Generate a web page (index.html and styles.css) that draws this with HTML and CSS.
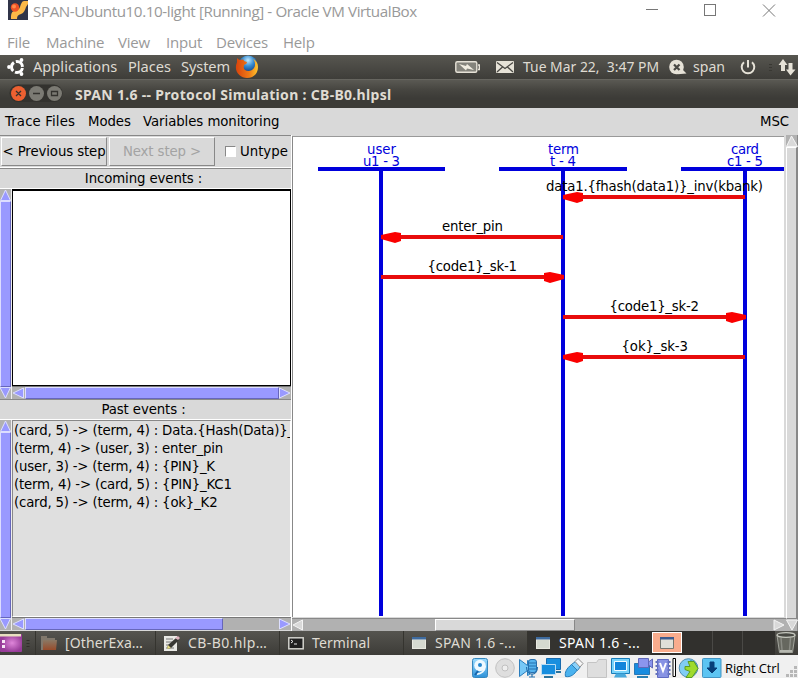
FILE: index.html
```html
<!DOCTYPE html>
<html lang="en">
<head>
<meta charset="utf-8">
<title>SPAN-Ubuntu10.10-light [Running] - Oracle VM VirtualBox</title>
<link rel="stylesheet" href="styles.css">
</head>
<body>
<header class="host">
  <div class="host-title">
    <svg class="app-icon" width="20" height="20" viewBox="0 0 20 20"><rect width="20" height="20" fill="#303448"/><path d="M20 1h-4c-2 0-3 3-4 6s-3 3-6 4-3 4-3 8h6c0-3 1-4 4-5s4-4 5-7l2-3z" fill="#fbb848"/><circle cx="7" cy="7.500" r="4.200" fill="#ee5226"/><circle cx="6" cy="6.500" r="2" fill="#ff8a4a"/></svg>
    <span class="host-name">SPAN-Ubuntu10.10-light [Running] - Oracle VM VirtualBox</span>
    <svg class="win-controls" width="132" height="14" viewBox="0 0 132 14" fill="none" stroke="#777"><path d="M0 4.500h12"/><rect x="58.500" y="-.5" width="11" height="11"/><path d="M117 -.5l12 12M129 -.5l-12 12"/></svg>
  </div>
  <nav class="host-menu"><span class="m-file">File</span><span class="m-machine">Machine</span><span class="m-view">View</span><span class="m-input">Input</span><span class="m-devices">Devices</span><span>Help</span></nav>
</header>

<div class="panel">
  <svg class="ubuntu" width="18" height="20" viewBox="0 0 18 20"><circle cx="11" cy="10" r="5.500" fill="none" stroke="#fff" stroke-width="3" stroke-dasharray="9.500 2.020" stroke-dashoffset="-1"/><g fill="#fff"><circle cx="3" cy="10" r="1.900"/><circle cx="15.500" cy="3" r="1.900"/><circle cx="15.500" cy="17" r="1.900"/></g></svg>
  <span class="p-app">Applications</span><span class="p-places">Places</span><span class="p-system">System</span>
  <svg class="firefox" width="24" height="24" viewBox="0 0 24 24"><defs><radialGradient id="globe" cx=".5" cy=".25" r=".7"><stop offset="0" stop-color="#bfe9ff"/><stop offset=".45" stop-color="#368bd0"/><stop offset="1" stop-color="#0b2e73"/></radialGradient><linearGradient id="fox" x1="0" x2="1"><stop offset="0" stop-color="#d9430c"/><stop offset=".6" stop-color="#ee7a16"/><stop offset="1" stop-color="#ffc62e"/></linearGradient></defs><circle cx="13" cy="10" r="9.500" fill="url(#globe)"/><path d="M2 3c1 1 2 2 4 2 2-1 3 0 3 1l3 1c0 2-2 2-3 3 0 2-1 3 1 5 3 2 7 1 9-2 2-3 1-7-1-9 3 1 5 4 5 8 0 7-5 11-11 11S0 18 1 11c0-2 1-3 1-4z" fill="url(#fox)"/></svg>
  <span class="grow"></span>
  <svg class="tray" width="343" height="24" viewBox="455 55 343 24">
    <rect x="455.800" y="61.800" width="21" height="10.500" rx="1.500" fill="#84837b" stroke="#e6e2d7" stroke-width="1.400"/><path d="M478 65h1.300v4.500H478" fill="none" stroke="#e6e2d7" stroke-width="1.400"/><path d="M459 64l7 2 1-2 7 6-7-1.500-1 2z" fill="#f0ece0"/>
    <rect x="496" y="61" width="18" height="12" rx="1" fill="#e6e2d7"/><path d="M497 62.500l8 6 8-6M497 72l5.500-5M513 72l-5.500-5" fill="none" stroke="#494843" stroke-width="1.300"/>
    <circle cx="676.500" cy="67" r="7.300" fill="#e6e2d7"/><path d="M681 68l5.500 5.500-9 .8z" fill="#e6e2d7"/><path d="M674 64.500l5.500 5.500M679.500 64.500L674 70" stroke="#494843" stroke-width="2.200"/>
    <path d="M744 62.200a6.300 6.300 0 1 0 8 0M748 60v7.500" fill="none" stroke="#e6e2d7" stroke-width="2"/>
    <path d="M769 64.500h3M769 67.500h3M769 70.500h3" stroke="#393833"/>
    <path d="M778.500 65l4.500-6 4.500 6h-2.500v6h-4v-6zM786 69.500h2.500V63h4v6.500h3l-5 6z" fill="#e6e2d7"/>
    <text class="ubuntu-text" x="523" y="72" textLength="136" lengthAdjust="spacingAndGlyphs" xml:space="preserve">Tue Mar 22,&#160; 3:47 PM</text>
    <text class="ubuntu-text" x="693" y="72" textLength="32" lengthAdjust="spacingAndGlyphs">span</text>
  </svg>
</div>

<div class="titlebar">
  <svg width="55" height="20" viewBox="9 84 55 20"><rect x="9.500" y="84.500" width="53" height="17.500" rx="8.700" fill="#33322e"/><circle cx="18.500" cy="93.500" r="7.500" fill="#ec6031"/><circle cx="36.500" cy="93.500" r="7.500" fill="#7b7a73"/><circle cx="54.500" cy="93.500" r="7.500" fill="#7b7a73"/><path d="M16 91l5 5M21 91l-5 5M33 93.500h7M51.500 91.500h6v4h-6z" fill="none" stroke="#33322e" stroke-width="1.300"/></svg>
  <strong>SPAN 1.6 -- Protocol Simulation : CB-B0.hlpsl</strong>
</div>

<nav class="menu"><span class="t-trace">Trace Files</span><span class="t-modes">Modes</span><span class="t-vars">Variables monitoring</span><span class="t-msc">MSC</span></nav>

<main class="work">
  <section class="left">
    <div class="tools">
      <button class="prev">&lt; Previous step</button><button class="next" disabled>Next step &gt;</button>
      <label><i class="box"></i><span>Untype</span></label>
    </div>
    <div class="label"><span class="l-in">Incoming events :</span></div>
    <div class="listing">
      <div class="vbar"><svg width="12" height="12" viewBox="0 0 12 12"><path d="M5.500 1L.5 11.500h10z" class="tri"/></svg><i class="thumb"></i><svg width="12" height="12" viewBox="0 0 12 12"><path d="M0 .5h10.500L5.500 11z" class="tri"/></svg></div>
      <div class="right">
        <div class="incoming"></div>
        <div class="hbar"><svg width="13" height="12" viewBox="0 0 13 12"><path d="M11.500 1v10L1 6z" class="tri"/></svg><i class="thumb"></i><svg width="12" height="12" viewBox="0 0 12 12"><path d="M.5 1v10L11 6z" class="tri"/></svg></div>
      </div>
    </div>
    <div class="label past-label"><span class="l-past">Past events :</span></div>
    <div class="listing">
      <div class="vbar"><svg width="12" height="12" viewBox="0 0 12 12"><path d="M5.500 1L.5 11.500h10z" class="tri"/></svg><i class="thumb"></i><svg width="12" height="12" viewBox="0 0 12 12"><path d="M0 .5h10.500L5.500 11z" class="tri"/></svg></div>
      <div class="right">
        <ul class="past"><li>(card, 5) -&gt; (term, 4) : Data.{Hash(Data)}_</li><li>(term, 4) -&gt; (user, 3) : enter_pin</li><li>(user, 3) -&gt; (term, 4) : {PIN}_K</li><li>(term, 4) -&gt; (card, 5) : {PIN}_KC1</li><li>(card, 5) -&gt; (term, 4) : {ok}_K2</li></ul>
        <div class="hbar"><svg width="13" height="12" viewBox="0 0 13 12"><path d="M11.500 1v10L1 6z" class="tri"/></svg><i class="thumb short"></i><span class="grow"></span><svg width="12" height="12" viewBox="0 0 12 12"><path d="M.5 1v10L11 6z" class="tri"/></svg></div>
      </div>
    </div>
  </section>
  <section class="chart">
    <div class="canvas">
      <svg width="491" height="479" viewBox="293 137 491 479">
        <defs><path id="head" d="M0-2L14-5l6 1v8L14 6 0 2z"/></defs>
        <g fill="#0000dc"><path d="M318 167h127v4H318zM499 167h128v4H499zM681 167h103v4H681zM379 169h4v447h-4zM561 169h4v447h-4zM743 169h4v447h-4z"/></g>
        <g fill="#e80c0c"><path d="M577 195h168v4H577zM395 235h168v4H395zM381 275h168v4H381zM563 315h168v4H563zM577 355h168v4H577z"/><g fill="#fa0000"><use href="#head" x="563" y="197"/><use href="#head" x="381" y="237"/><use href="#head" transform="translate(564 277) scale(-1 1)"/><use href="#head" transform="translate(746 317) scale(-1 1)"/><use href="#head" x="563" y="357"/></g></g>
        <g class="actor"><text x="367" y="154" textLength="29">user</text><text x="363" y="166" textLength="37">u1 - 3</text><text x="548" y="154" textLength="31">term</text><text x="550" y="166" textLength="26">t - 4</text><text x="731" y="154" textLength="28">card</text><text x="727" y="166" textLength="36">c1 - 5</text></g>
        <g class="msg"><text x="546" y="191" textLength="217">data1.{fhash(data1)}_inv(kbank)</text><text x="442" y="231" textLength="61">enter_pin</text><text x="427.500" y="271" textLength="89.500">{code1}_sk-1</text><text x="609.500" y="311" textLength="89.500">{code1}_sk-2</text><text x="621.500" y="351" textLength="66.500">{ok}_sk-3</text></g>
      </svg>
    </div>
    <div class="vbar grey"><svg width="12" height="12" viewBox="0 0 12 12"><path d="M5.500 1L.5 11.500h11z" class="tri"/></svg><i class="thumb"></i><svg width="12" height="12" viewBox="0 0 12 12"><path d="M.5 1h11L6 11z" class="tri"/></svg></div>
    <div class="hbar grey"><svg width="13" height="12" viewBox="0 0 13 12"><path d="M10.500 1v10L1 6z" class="tri"/></svg><span class="gap"></span><i class="thumb mid"></i><span class="grow"></span><svg width="13" height="12" viewBox="0 0 13 12"><path d="M1 1v10L11 6z" class="tri"/></svg></div>
    <div class="vbar grey corner"><svg width="12" height="12" viewBox="0 0 12 12"><path d="M.5 1h11L6 11z" class="tri"/></svg></div>
  </section>
</main>

<footer class="taskbar">
  <div class="desk"><svg width="36" height="24" viewBox="0 0 36 24"><defs><radialGradient id="wall" cx=".55"><stop offset="0" stop-color="#df86da"/><stop offset="1" stop-color="#973c99"/></radialGradient></defs><rect y="3" width="22" height="18" rx="1" fill="url(#wall)"/><path d="M0 3h21v2.500H0z" fill="#e8dfc1"/><path d="M2 9h3v3H2zM2 14h3v3H2z" fill="#f7e4f5"/><path d="M26.500 9.500h3M26.500 12.500h3M26.500 15.500h3" stroke="#302f2b"/></svg></div>
  <div class="task w1"><svg width="17" height="16" viewBox="0 0 17 16"><defs><linearGradient id="fold" x2="0" y2="1"><stop stop-color="#8a7965"/><stop offset="1" stop-color="#984c2b"/></linearGradient></defs><path d="M1 1h6v2h8v12H1z" fill="#81786c"/><path d="M3 5h14l-1 10H3z" fill="url(#fold)"/></svg><span class="x1">[OtherExa…</span></div>
  <div class="task w2"><svg width="17" height="16" viewBox="0 0 17 16"><path d="M1 1h13v15H1z" fill="#e9e9e5"/><path d="M3 4h7M3 7h6M3 10h5M3 13h8" stroke="#777"/><path d="M4 14l1-4L13 3l3 2-8 8z" fill="#383834"/><path d="M4 14l1-4 3 3z" fill="#e6dd82"/><path d="M12 3l3-2 2 2-2 2z" fill="#deb2be"/></svg><span class="x2">CB-B0.hlp…</span></div>
  <div class="task w3"><svg width="16" height="14" viewBox="0 0 16 14"><rect x=".8" y="1.800" width="14.400" height="11" fill="#202020" stroke="#d2d2cc" stroke-width="1.500"/><path d="M3 4l2 1.500L3 7M6 8h3" fill="none" stroke="#eee"/></svg><span class="x3">Terminal</span></div>
  <div class="task w4"><svg width="14" height="12" viewBox="0 0 14 12"><path d="M0 0h14v12H0z" fill="#e8e8e0"/><path d="M0 0h14v2.500H0z" fill="#3e6b9f"/><path d="M1 3h12v8H1z" fill="#d5d9d0"/></svg><span class="x4">SPAN 1.6 -...</span></div>
  <div class="task w5"><svg width="14" height="12" viewBox="0 0 14 12"><path d="M0 0h14v12H0z" fill="#e8e8e0"/><path d="M0 0h14v2.500H0z" fill="#3e6b9f"/><path d="M1 3h12v8H1z" fill="#d5d9d0"/></svg><span class="x4">SPAN 1.6 -...</span></div>
  <div class="pager"><div class="ws on"><svg width="14" height="12" viewBox="0 0 14 12"><path d="M.5.5h13v11H.5z" fill="#e0e0d8" stroke="#77786f"/><path d="M0 0h14v2.500H0z" fill="#3e5b8f"/></svg></div><div class="ws"></div><div class="ws"></div><div class="ws last"></div></div>
  <svg class="trash" width="22" height="24" viewBox="0 0 22 24"><path d="M2 4h18l-2.500 17.500h-13z" fill="#66675f" stroke="#a2a49c"/><path d="M6 7l1 12M15.500 7l-1 12" stroke="#8a8b84" stroke-width="1.500"/><ellipse cx="11" cy="4" rx="9" ry="2.300" fill="#484944" stroke="#c6c8bf" stroke-width="1.300"/><path d="M5 20h12" stroke="#b6b8b0" stroke-width="2"/></svg>
</footer>

<div class="status">
  <svg width="252" height="23" viewBox="471 655 252 23">
    <defs><linearGradient id="blue" x2="0" y2="1"><stop stop-color="#9bdcff"/><stop offset="1" stop-color="#2c91d9"/></linearGradient></defs>
    <rect x="472.500" y="658.500" width="15" height="19" rx="2" fill="url(#blue)" stroke="#3687bd"/><circle cx="480" cy="665.500" r="5.800" fill="#eef9ff"/><circle cx="480" cy="665" r="2" fill="#2386ce"/><path d="M485 666c0 5-4 8-8 8" fill="none" stroke="#eef9ff" stroke-width="2"/><path d="M478 671l-3 4" stroke="#1765ac" stroke-width="2"/>
    <circle cx="505" cy="668" r="9.300" fill="#dedede" stroke="#c2c2c2"/><circle cx="505" cy="668" r="3" fill="#eee" stroke="#c0c0c0"/>
    <path d="M519.500 659.500l8 6v-5l2 1v13l-2 1v-5l-8 6z" fill="#77c8f7" stroke="#297dbd"/><rect x="528.500" y="659.500" width="8" height="13" rx="2.500" fill="#54b3ef" stroke="#286fae"/><path d="M526.500 667c0 9.500 11 9.500 11 0M532 674v3M529 677h6M529 663h7M529 666h7M529 669h7" fill="none" stroke="#2470ad" stroke-width="1.200"/>
    <path d="M546.500 658.500h14v11h-14z" fill="#198fdf" stroke="#186aad"/><path d="M541.500 664.500h14v10h-14z" fill="#178edf" stroke="#b8dcf4"/><path d="M544 677h9M556 672h5" stroke="#2b739c" stroke-width="2"/>
    <path d="M565.500 676.500c-1-4 1-8 6-12l6 5c-3 5-7 8-12 7z" fill="#4ab2ef" stroke="#267dba"/><path d="M571.500 664.500l4-3 5 5-3 4z" fill="#8ad1fa" stroke="#317eb4"/><path d="M575 661.500l3-3 5 5-3 3.500z" fill="#f7f7f7" stroke="#909090"/>
    <path d="M587.500 677.500v-15h9l2-3h8v18z" fill="#dedede" stroke="#c4c4c4"/>
    <path d="M611.500 658.500h18v15h-18z" fill="#78d3fb" stroke="#187cb9"/><path d="M614.500 661.500h12v9h-12z" fill="#1285db" stroke="#f1fbff"/><path d="M614 677.500h13l-2-4h-9z" fill="#48a9dc"/>
    <path d="M634.500 663.500h15v11h-15z" fill="#188ce0" stroke="#2a78b4"/><path d="M637 677h11" stroke="#287fb4" stroke-width="2"/><path d="M638.500 658.500h10v9h-10zM648.500 662l4-3v9l-4-3z" fill="#8a95ed" stroke="#6068b8"/>
    <path d="M657.500 659.500h11v18h-11z" fill="#8793e4" stroke="#606bc2"/><path d="M655.500 662h3M655.500 666h3M655.500 670h3M655.500 674h3M667.500 662h3M667.500 666h3M667.500 670h3M667.500 674h3" stroke="#6472bd" stroke-width="2"/><path d="M660 663l3 8 3-8" fill="none" stroke="#fff" stroke-width="2"/>
    <path d="M673 658.500h2.500v18H673z" fill="#fff" stroke="#000"/>
    <circle cx="688.500" cy="668" r="9.300" fill="#80cdf5" stroke="#518fb5"/><path d="M690 660c5 1 7 4 7 8l-4-2z" fill="#2b90a8"/><path d="M688 661.500h6l4 7-6 9h-6l4-6-5-2v-3h5z" fill="#9fdb2d" stroke="#5c9c26"/>
    <rect x="702.500" y="658.500" width="18.500" height="19" rx="1" fill="#5cc4f2" stroke="#4395c4"/><path d="M710 662h4v6h3l-5 5-5-5h3z" fill="#063e78" stroke="#063e78"/>
  </svg>
  <span class="ctrl">Right Ctrl</span>
  <svg class="grip" width="12" height="12" viewBox="0 0 12 12" fill="#b7b7b7"><path d="M8 0h3v3H8zM4 4h3v3H4zM8 4h3v3H8zM0 8h3v3H0zM4 8h3v3H4zM8 8h3v3H8z"/></svg>
</div>
</body>
</html>
```
FILE: styles.css
```css
* { box-sizing: border-box; }
body { margin: 0; width: 798px; height: 678px; overflow: hidden; background: #f0f0f0; color: #000; font: 13.3px "DejaVu Sans", sans-serif; white-space: nowrap; }
svg { display: block; flex: none; overflow: visible; }
.grow { flex: 1; }

.host { height: 55px; background: #fff; color: #999; font: 15.2px/20px "Open Sans", sans-serif; }
.host-title { display: flex; height: 32px; padding-left: 8px; }
.app-icon { margin-right: 5px; }
.host-name { flex: 1; line-height: 22px; letter-spacing: -.41px; }
.win-controls { margin: 5px 20px 0 0; }
.host-menu { display: flex; padding-left: 7px; line-height: 20px; font-size: 15px; letter-spacing: -.2px; }
.m-file { width: 39px; } .m-machine { width: 72px; } .m-view { width: 48px; } .m-input { width: 50px; } .m-devices { width: 67px; }

.panel { display: flex; align-items: center; height: 24px; background: linear-gradient(#575650, #3e3d39); color: #dfdbd2; font: 14.6px/22px "Noto Sans", sans-serif; }
.panel > span { height: 24px; }
.ubuntu { margin-left: 6px; margin-right: 9px; }
.p-app { width: 95px; letter-spacing: .03px; } .p-places { width: 53px; } .p-system { width: 54px; letter-spacing: -.1px; }
.ubuntu-text { fill: #dfdbd2; font: 14.5px "Noto Sans", sans-serif; }

.titlebar { display: flex; align-items: center; height: 29px; padding-left: 9px; background: linear-gradient(#5a5953 0, #464540 35%, #3c3b37 65%); border-top: 1px solid #66655f; color: #dfdbd2; font: 14px/27px "Noto Sans", sans-serif; }
.titlebar strong { margin-left: 11px; letter-spacing: .31px; }

.menu { display: flex; height: 27px; padding-left: 5px; background: #d9d9d9; line-height: 27px; letter-spacing: -.06px; }
.t-trace { width: 83px; letter-spacing: .12px; } .t-modes { width: 55px; } .t-vars { flex: 1; } .t-msc { width: 38px; }

.work { display: flex; height: 496px; background: #d9d9d9; }
.left { width: 292px; border-right: 1px solid #fff; }
.tools { display: flex; height: 33px; border-top: 1px solid #888; border-bottom: 1px solid #fff; padding-top: 1px; }
.tools button { height: 29px; padding: 0; border: 1px solid; border-color: #fff #888 #888 #fff; background: #d9d9d9; color: #000; font: inherit; letter-spacing: -.1px; white-space: nowrap; }
.prev { width: 106px; margin: 0 2px 0 1px; }
.tools .next { width: 106px; color: #a3a3a3; }
.tools label { display: flex; align-items: center; height: 28px; margin-left: 10px; }
.box { width: 11px; height: 11px; margin-right: 4px; background: #fff; border: 1px solid; border-color: #888 #fff #fff #888; }
.label { height: 21px; border-top: 1px solid #888; border-bottom: 1px solid #fff; text-align: center; line-height: 19px; padding-right: 4px; letter-spacing: -.1px; }
.listing { display: flex; height: 210px; }
.right { width: 279px; }
.incoming { height: 197px; background: #fff; border: 1px solid #000; border-top-width: 2px; border-left-width: 1.500px; }
.past { height: 197px; margin: 0; padding: 1px 0 0 1px; list-style: none; overflow: hidden; background: #dfdfdf; border: 1px solid; border-color: #888 #fff #fff #888; line-height: 18px; letter-spacing: -.18px; }
.vbar { display: flex; flex-direction: column; width: 12px; background: #b1b1b1; border-right: 1px solid #eee; }
.vbar .thumb { flex: 1; }
.thumb { display: block; background: #9999ff; border: 1px solid; border-color: #ddf #66b #66b #ddf; }
.hbar { display: flex; height: 13px; background: #b1b1b1; border-top: 1px solid #777; }
.hbar .thumb { flex: 1; height: 12px; }
.hbar .short { flex: none; width: 198px; }
.tri { fill: #9999ff; stroke: #dddfff; stroke-width: 1; }
.chart { display: grid; grid-template-columns: 494px 12px; grid-template-rows: 483px 13px; }
.canvas { margin-top: 1px; width: 492px; height: 481px; background: #fff; border-top: 1px solid #999; border-left: 1px solid #888; }
.chart > .vbar:not(.corner) { grid-row: 1 / 3; grid-column: 2; }
.chart > .corner { display: none; }
.grey { border-color: #888; }
.grey .tri { fill: #d9d9d9; stroke: #f5f5f5; }
.grey .thumb { background: #d9d9d9; border-color: #fff #888 #888 #fff; }
.hbar .gap { width: 130px; } .hbar .mid { flex: none; width: 140px; }
.actor, .msg { font: 13.3px "DejaVu Sans", sans-serif; }
.actor { fill: #0000dc; }

.taskbar { display: flex; height: 24px; background: linear-gradient(#55544f, #3d3c38); color: #dfdbd2; font: 14px/24px "Noto Sans", sans-serif; }
.desk { width: 35px; }
.task { display: flex; align-items: center; border-left: 1px solid #35342f; padding-left: 4px; }
.w1 { width: 120px; } .w2 { width: 124px; padding-left: 7px; } .w3 { width: 124px; padding-left: 8px; } .w4 { width: 124px; padding-left: 8px; }
.w5 { width: 124px; padding-left: 8px; background: #343330; color: #fff; }
.x1 { margin-left: 8px; letter-spacing: .1px; } .x2 { margin-left: 8px; letter-spacing: .4px; } .x3 { margin-left: 8px; letter-spacing: .1px; } .x4 { margin-left: 9px; letter-spacing: .25px; }
.pager { display: flex; flex: 1; background: #31302d; }
.ws { width: 30px; border-right: 1px solid #4a4946; }
.ws.on { display: flex; align-items: center; justify-content: center; height: 21px; margin: 1px 1px 0; background: #f9ac8d; border: 1px solid #fff; }
.ws.last { border: 0; }
.trash { margin: 0 1px 0 0; }

.status { display: flex; height: 23px; padding-left: 471px; background: #f0f0f0; font: 13px/26px "Open Sans", sans-serif; }
.ctrl { margin-left: 2px; letter-spacing: -.1px; }
.grip { margin: 11px 0 0 auto; }
```
